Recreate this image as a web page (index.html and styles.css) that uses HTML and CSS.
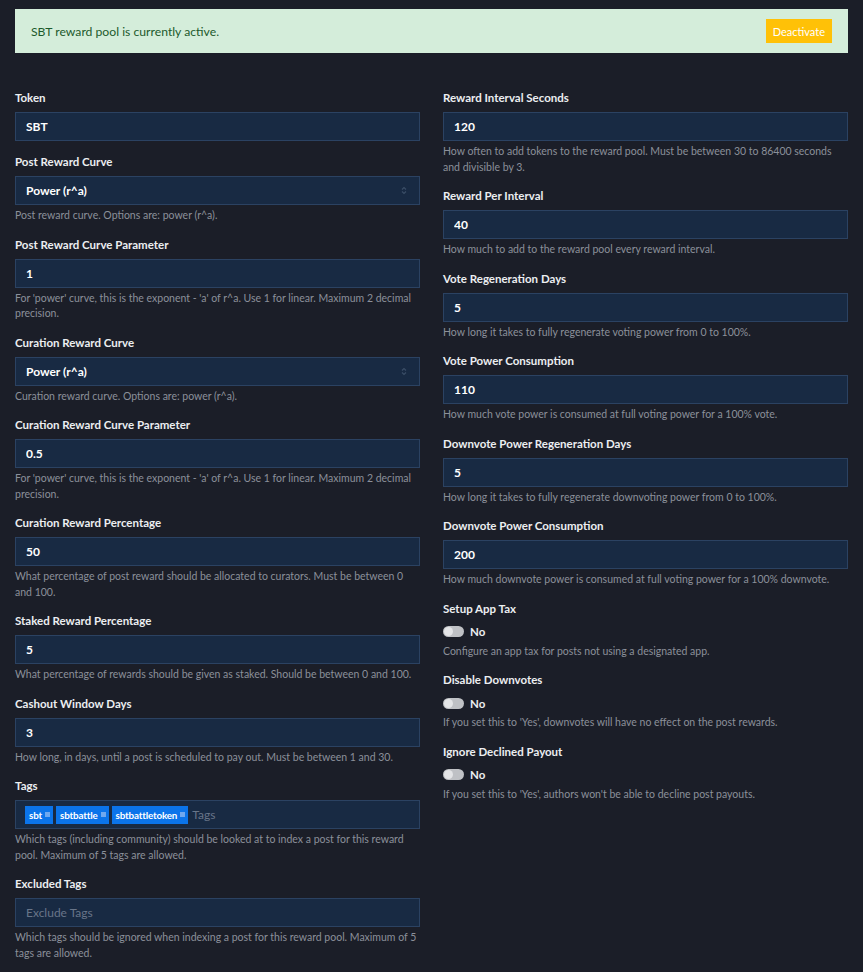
FILE: index.html
```html
<!DOCTYPE html>
<html lang="en">
<head>
    <meta charset="UTF-8">
    <meta name="viewport" content="width=device-width, initial-scale=1.0">
    <title>Reward Pool</title>
    <link rel="stylesheet" href="styles.css">
</head>
<body>
    <div class="alert">
        <span>SBT reward pool is currently active.</span>
        <button type="button" class="btn-warning">Deactivate</button>
    </div>

    <form class="pool-form">
        <div class="col">
            <div class="group">
                <label>Token</label>
                <input type="text" value="SBT">
            </div>
            <div class="group">
                <label>Post Reward Curve</label>
                <div class="select">Power (r^a)
                    <svg width="6" height="9" viewBox="0 0 6 9"><path d="M1 3.5 3 1.5 5 3.5M1 5.5 3 7.5 5 5.5" fill="none" stroke="#3a4d66" stroke-width="1.2"/></svg>
                </div>
                <p class="help">Post reward curve. Options are: power (r^a).</p>
            </div>
            <div class="group">
                <label>Post Reward Curve Parameter</label>
                <input type="text" value="1">
                <p class="help">For 'power' curve, this is the exponent - 'a' of r^a. Use 1 for linear. Maximum 2 decimal precision.</p>
            </div>
            <div class="group">
                <label>Curation Reward Curve</label>
                <div class="select">Power (r^a)
                    <svg width="6" height="9" viewBox="0 0 6 9"><path d="M1 3.5 3 1.5 5 3.5M1 5.5 3 7.5 5 5.5" fill="none" stroke="#3a4d66" stroke-width="1.2"/></svg>
                </div>
                <p class="help">Curation reward curve. Options are: power (r^a).</p>
            </div>
            <div class="group">
                <label>Curation Reward Curve Parameter</label>
                <input type="text" value="0.5">
                <p class="help">For 'power' curve, this is the exponent - 'a' of r^a. Use 1 for linear. Maximum 2 decimal precision.</p>
            </div>
            <div class="group">
                <label>Curation Reward Percentage</label>
                <input type="text" value="50">
                <p class="help">What percentage of post reward should be allocated to curators. Must be between 0 and 100.</p>
            </div>
            <div class="group">
                <label>Staked Reward Percentage</label>
                <input type="text" value="5">
                <p class="help">What percentage of rewards should be given as staked. Should be between 0 and 100.</p>
            </div>
            <div class="group">
                <label>Cashout Window Days</label>
                <input type="text" value="3">
                <p class="help">How long, in days, until a post is scheduled to pay out. Must be between 1 and 30.</p>
            </div>
            <div class="group">
                <label>Tags</label>
                <div class="tags">
                    <span class="tag">sbt <i></i></span>
                    <span class="tag">sbtbattle <i></i></span>
                    <span class="tag">sbtbattletoken <i></i></span>
                    <span class="placeholder">Tags</span>
                </div>
                <p class="help">Which tags (including community) should be looked at to index a post for this reward pool. Maximum of 5 tags are allowed.</p>
            </div>
            <div class="group">
                <label>Excluded Tags</label>
                <input type="text" placeholder="Exclude Tags">
                <p class="help">Which tags should be ignored when indexing a post for this reward pool. Maximum of 5 tags are allowed.</p>
            </div>
        </div>

        <div class="col">
            <div class="group">
                <label>Reward Interval Seconds</label>
                <input type="text" value="120">
                <p class="help">How often to add tokens to the reward pool. Must be between 30 to 86400 seconds and divisible by 3.</p>
            </div>
            <div class="group">
                <label>Reward Per Interval</label>
                <input type="text" value="40">
                <p class="help">How much to add to the reward pool every reward interval.</p>
            </div>
            <div class="group">
                <label>Vote Regeneration Days</label>
                <input type="text" value="5">
                <p class="help">How long it takes to fully regenerate voting power from 0 to 100%.</p>
            </div>
            <div class="group">
                <label>Vote Power Consumption</label>
                <input type="text" value="110">
                <p class="help">How much vote power is consumed at full voting power for a 100% vote.</p>
            </div>
            <div class="group">
                <label>Downvote Power Regeneration Days</label>
                <input type="text" value="5">
                <p class="help">How long it takes to fully regenerate downvoting power from 0 to 100%.</p>
            </div>
            <div class="group">
                <label>Downvote Power Consumption</label>
                <input type="text" value="200">
                <p class="help">How much downvote power is consumed at full voting power for a 100% downvote.</p>
            </div>
            <div class="group">
                <label>Setup App Tax</label>
                <div class="switch"><span class="knob"></span>No</div>
                <p class="help">Configure an app tax for posts not using a designated app.</p>
            </div>
            <div class="group">
                <label>Disable Downvotes</label>
                <div class="switch"><span class="knob"></span>No</div>
                <p class="help">If you set this to 'Yes', downvotes will have no effect on the post rewards.</p>
            </div>
            <div class="group">
                <label>Ignore Declined Payout</label>
                <div class="switch"><span class="knob"></span>No</div>
                <p class="help">If you set this to 'Yes', authors won't be able to decline post payouts.</p>
            </div>
        </div>
    </form>
</body>
</html>
```

FILE: styles.css
```css
body {
    font-family: Lato, "Noto Sans", sans-serif;
    margin: 0;
    padding: 9px 15px 0;
    background: #1b1e28;
    color: #e6e8ec;
}
.alert {
    height: 44px;
    box-sizing: border-box;
    display: flex;
    align-items: center;
    justify-content: space-between;
    padding: 0 16px;
    background: #d4edda;
    color: #1d5a2c;
    font-size: 12.2px;
}
.btn-warning {
    height: 24px;
    padding: 0 7px;
    border: none;
    background: #ffc107;
    color: #fff;
    font-family: inherit;
    font-size: 11px;
    font-weight: 400;
}
.pool-form {
    display: grid;
    grid-template-columns: 1fr 1fr;
    column-gap: 23px;
    margin-top: 37px;
}
.group {
    margin-bottom: 13px;
}
.group label {
    display: block;
    height: 16px;
    line-height: 16px;
    margin-bottom: 6px;
    font-size: 11.5px;
    font-weight: 700;
    color: #eceef1;
}
.group input,
.select,
.tags {
    display: block;
    width: 100%;
    height: 29px;
    box-sizing: border-box;
    padding: 0 10px;
    background: #182a43;
    border: 1px solid #2b4262;
    color: #fff;
    font-family: inherit;
    font-size: 12px;
    font-weight: 700;
    outline: none;
}
.group input::placeholder {
    color: #687589;
    font-weight: 400;
}
.select {
    display: flex;
    align-items: center;
    justify-content: space-between;
}
.select svg {
    margin-right: 2px;
}
.tags {
    display: flex;
    align-items: center;
    gap: 3px;
    padding: 0 9px;
}
.tag {
    display: flex;
    align-items: center;
    height: 18px;
    padding: 0 3px 0 4px;
    background: #0b74ea;
    color: #fff;
    font-size: 9.8px;
    font-weight: 700;
    letter-spacing: -0.15px;
}
.tag i {
    width: 5px;
    height: 5px;
    margin-left: 3px;
    background: #6fa8ef;
}
.placeholder {
    margin-left: 1px;
    color: #687589;
    font-weight: 400;
    font-size: 12px;
}
.help {
    margin: 3px 0 0;
    font-size: 10.5px;
    line-height: 15.5px;
    color: #8b909a;
}
.switch {
    display: flex;
    align-items: center;
    height: 18px;
    margin-top: 6px;
    font-size: 11.5px;
    font-weight: 700;
    color: #eceef1;
}
.knob {
    position: relative;
    width: 21px;
    height: 11px;
    margin-right: 6px;
    border-radius: 6px;
    background: #bfc1c5;
}
.knob::after {
    content: "";
    position: absolute;
    left: 1px;
    top: 1px;
    width: 9px;
    height: 9px;
    border-radius: 50%;
    background: #e4e5e7;
}
```
